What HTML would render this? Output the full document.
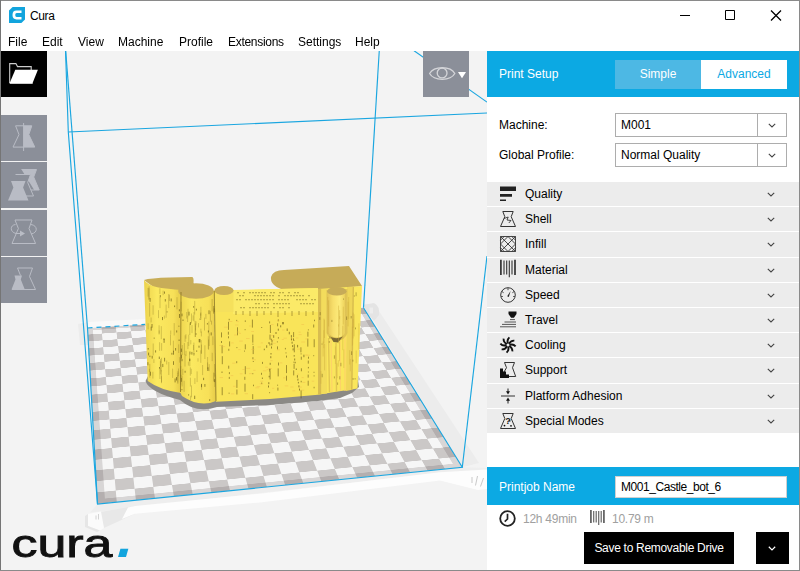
<!DOCTYPE html>
<html>
<head>
<meta charset="utf-8">
<title>Cura</title>
<style>
*{box-sizing:border-box;margin:0;padding:0}
html,body{width:800px;height:571px;overflow:hidden;background:#fff}
body{font-family:"Liberation Sans",sans-serif;font-size:12px;color:#000;position:relative}
.abs{position:absolute}
#win{position:absolute;left:0;top:0;width:800px;height:571px;background:#fff;overflow:hidden}
#titlebar{position:absolute;left:0;top:0;width:800px;height:31px;background:#fff}
#title{position:absolute;left:30px;top:8px;font-size:12px;line-height:16px;color:#000;letter-spacing:-0.4px}
#menubar{position:absolute;left:0;top:31px;width:800px;height:20px;background:#fff}
#menubar span{position:absolute;top:3px;font-size:12px;line-height:16px;white-space:nowrap}
#viewport{position:absolute;left:1px;top:51px;width:799px;height:520px;background:#f3f3f3;overflow:hidden}
#bed{position:absolute;left:-1px;top:-51px;width:400px;height:400px;transform-origin:0 0;
 transform:matrix3d(0.73154056,-0.01664434,0.00000000,0.00011084,-0.03567668,0.11988670,0.00000000,-0.00063515,0.00000000,0.00000000,1.00000000,0.00000000,87.00000000,328.00000000,0.00000000,1.00000000);
 background:repeating-conic-gradient(#cbc8c7 0% 25%,#f6f6f6 0% 50%) 0 0/40px 40px;box-shadow:inset 0 0 0 8px rgba(60,50,50,0.16);}
#scene{position:absolute;left:-1px;top:-51px;width:800px;height:571px}
.tool{position:absolute;left:0;width:46px;height:46px;background:#8b8f99}
#open{position:absolute;left:0;top:0;width:46px;height:46px;background:#000}
#viewbtn{position:absolute;left:422px;top:0;width:46px;height:46px;background:#8b8f99}
#side{position:absolute;left:487px;top:51px;width:313px;height:520px;background:#fff}
#hdr{position:absolute;left:0;top:0;width:313px;height:46px;background:#0ca9e3}
#hdr .lbl{position:absolute;left:12px;top:15px;color:#fff;font-size:12px;line-height:16px}
.tab{position:absolute;top:9px;height:29px;width:86px;text-align:center;font-size:12px;line-height:29px}
#simple{left:128px;background:#4db8e4;color:#fff}
#adv{left:214px;width:86px;background:#fff;color:#0ca9e3}
.flabel{position:absolute;left:12px;font-size:12px;line-height:16px}
.combo{position:absolute;left:128px;width:172px;height:24px;border:1px solid #adadad;background:#fff;font-size:12px;line-height:23px;padding-left:5px}
.combo i{position:absolute;right:0;top:0;width:29px;height:22px;border-left:1px solid #adadad}
.chev{position:absolute;width:10px;height:6px}
.cat{position:absolute;left:0;width:313px;height:24.2px;background:#ececec}
.cat span{position:absolute;left:38px;top:4px;font-size:12px;line-height:16px;white-space:nowrap}
.cat svg.ic{position:absolute;left:13px;top:4px;width:16px;height:16px;overflow:visible}
#job{position:absolute;left:0;top:416px;width:313px;height:38px;background:#0ca9e3}
#job .lbl{position:absolute;left:12px;top:12px;color:#fff;font-size:12px;line-height:16px}
#job .inp{position:absolute;left:128px;top:9px;width:172px;height:22px;background:#fff;border:1px solid #d0d0d0;font-size:12px;line-height:20px;padding-left:5px;letter-spacing:-0.45px}
#stats{position:absolute;left:0;top:459px;width:313px;height:16px;color:#a0a0a0;font-size:12px;line-height:16px;letter-spacing:-0.25px}
#save{position:absolute;left:97px;top:481px;width:150px;height:32px;background:#000;color:#fff;font-size:12px;line-height:32px;text-align:center;letter-spacing:-0.3px}
#savedd{position:absolute;left:269px;top:481px;width:33px;height:32px;background:#000}
</style>
</head>
<body>
<div id="win">
 <div id="viewport">
  <svg id="scene" viewBox="0 0 800 571"></svg>
  <div id="bed"></div>
  <svg id="scene2" class="abs" style="left:-1px;top:-51px;width:800px;height:571px" viewBox="0 0 800 571">

   <defs>
    <pattern id="tx" width="7" height="23" patternUnits="userSpaceOnUse"><path d="M1.5 2v7 M4.5 12v8 M6 1v3" stroke="#8a7420" stroke-width=".6" opacity=".55"/></pattern>
    <pattern id="tx2" width="9" height="9" patternUnits="userSpaceOnUse"><path d="M1 1v5 M5.5 4v4" stroke="#6b5a14" stroke-width=".7" opacity=".6"/></pattern>
    <linearGradient id="cyl" x1="0" x2="1" y1="0" y2="0"><stop offset="0" stop-color="#ecd24c"/><stop offset=".35" stop-color="#fbe960"/><stop offset=".8" stop-color="#f7e058"/><stop offset="1" stop-color="#e6cb48"/></linearGradient>
    <linearGradient id="cyl2" x1="0" x2="1" y1="0" y2="0"><stop offset="0" stop-color="#e4c556"/><stop offset=".3" stop-color="#f7de6a"/><stop offset=".65" stop-color="#fdec7c"/><stop offset=".9" stop-color="#f0d660"/><stop offset="1" stop-color="#d9bb50"/></linearGradient>
   </defs>
   <!-- platform rim -->
   <path d="M97.500 504 L462.300 467.300 L487 468 L487 472 L440 472.500 L100 511.500 L90 512.500z" fill="#eeeeee"/><path d="M100 512 L135 506 L135 513.700 L104 528z" fill="#e8e8e8"/><path d="M128 507.500 L135 506 L260 493.700 L440 472.300 L487 469.500 L487 489 L478 490 L440 480.500 L260 502.500 L135 513.700 L122 519z" fill="#fdfdfd"/><path d="M88 514 L101 511.500 L104 528 L100 530.500 L88 526z" fill="#fbfbfb"/><path d="M85 516 L88 514 L88 526 L100 530.500 L97 532 L85 527z" fill="#e6e6e6"/>
   <path d="M363.500 304 L374 303.500 L479 463 L462.300 467.300z" fill="#ececec"/>
   <path d="M80 322.500 L145 319 L145 324.400 L87.500 328 L80 333z" fill="#f9f9f9"/><path d="M78 324 L87 322 L88 345 L80 345z" fill="#ececec"/>
   <path d="M363.500 305 L374 303 Q380 306 379 315 L374 321 L367 313z" fill="#e4e4e4"/><path d="M369.500 307.500h3.500v6h-3.500z" fill="#ededed"/>
   <path d="M472 477v6 M477.500 476l-2 9.500 M483.500 478l-3 8.500" stroke="#c9c9c9" stroke-width="1" fill="none"/><path d="M98.500 514v5.500 M96 515.500v4" stroke="#c9c9c9" stroke-width=".8" fill="none"/>
   <!--MODEL--><g id="model">
    <!-- shadows -->
    <path d="M145.500 381 Q149 392 180 400 Q196 414 217 407 L270 405 L318 401 L340 398 L352 393 L359 387 L358 380 L150 372z" fill="#8b8985"/>
    <!-- tower A top + back bump -->
    <path d="M144 280 Q150 278 170 277.5 L192 277 Q194 277 193.5 283 L200 296 L160 292z" fill="#c8ad58"/>
    <!-- tower A body -->
    <path d="M144 280 Q149 287 166 288.6 Q176 290 181 290 L181 393 Q160 390 147.7 381z" fill="url(#cyl)"/>
    <!-- tower B -->
    <path d="M178.5 291 L214 291 L216 401 Q200 408 182 396 L180 392z" fill="url(#cyl)"/>
    <ellipse cx="196" cy="291" rx="17.8" ry="7.8" fill="#c8ad58"/>
    <!-- top dark face right -->
    <path d="M271 277 Q273 270 284 270 L349 266 L362 286 L318 291 L281 289 Q270 285 271 277z" fill="#c6ab58"/>
    <!-- front wall -->
    <path d="M214 291 L318 288 L318 394.700 L270 399 L216 401.700z" fill="#f9e459"/>
    <path d="M233 290 L318 288 L318 312 L233 314z" fill="#fbea68"/>
    <!-- small cylinder C -->
    <path d="M214.5 290 L233.5 290 L233.5 312 L216 312z" fill="#f5e05c"/>
    <ellipse cx="224" cy="290.5" rx="9.6" ry="4.5" fill="#c8ad58"/>
    <!-- right tower D -->
    <path d="M318 289 L362 286 L357.500 388.500 L334.500 392 L318 394.700z" fill="#fae65c"/>
    <path d="M318 289 L321.500 289 L321.500 394 L318 394.700z" fill="#d9bd50"/>
    <path d="M321.500 289 L327 289 L327 393.400 L321.500 394z" fill="#f3dc5c"/>
    <path d="M347 287 L352.500 287 L351 390 L346 391z" fill="#efd658"/>
    <path d="M352.500 287 L354 287 L352.500 390 L351 390z" fill="#d8bc4e"/>
    <path d="M331 340 L332 392 M340 341 L340.500 391 M345 300 L345 391" stroke="#fdd368" stroke-width="1.200" fill="none"/>
    <path d="M328.500 338 L329.500 392 M336 343 L336.500 392" stroke="#e2c652" stroke-width="1.400" fill="none"/>
    <!-- inset cylinder -->
    <path d="M326.500 290 L347.500 289 L347.500 333 Q345 340 337 341 Q329 340 326.500 333z" fill="#e0c455"/>
    <path d="M327.500 291 L346 291 L346 330 Q345 337 337 337.600 Q329 337 327.500 330z" fill="url(#cyl2)"/>
    <path d="M330.500 337 Q337 339.500 343 336.500 L338 342.500 L333.500 342z" fill="#7d6a34"/>
    <ellipse cx="336.800" cy="291.300" rx="9.800" ry="4.300" fill="#c6ab58"/>
    <!-- texture -->
    <g id="tex" fill="none" stroke-linecap="butt">
     <path d="M177.8 374.6v9.2M178.7 344.4v8.6M159.6 342.2v8.6M200.9 328.7v4.0M153.2 343.5v11.9M149.8 363.9v13.8M191.5 313.5v9.8M148.0 287.8v8.8M159.9 288.3v5.7M178.5 368.5v7.8M182.3 345.0v10.0M192.0 325.1v8.0M214.8 373.0v14.0M195.1 320.9v6.5M166.7 360.6v3.8M174.2 323.1v12.3M212.1 299.0v12.3M161.3 326.2v13.0M213.7 305.9v7.4M189.8 323.4v11.6M152.9 371.8v6.7M198.5 323.1v4.3M153.9 359.3v3.7M159.1 325.3v9.2M160.0 297.0v11.1M190.8 340.1v4.3M161.5 376.2v6.0M201.6 383.6v6.3M161.3 364.1v7.3M190.6 395.8v4.1M161.5 357.8v5.8M169.4 294.7v6.3M153.1 305.3v9.4M187.9 342.0v7.1M212.2 352.8v8.3M205.9 313.9v5.0M208.8 321.5v12.0M159.9 367.9v11.1M160.4 360.9v13.5M188.0 308.8v7.6M149.6 303.0v13.6M194.9 378.2v5.8M187.6 315.8v6.2M196.0 321.4v3.8M185.0 354.1v12.4M166.1 304.6v13.1M148.1 323.3v6.0M151.1 317.5v4.9M185.9 334.3v4.4M207.6 357.0v13.8M194.0 312.0v9.4M149.4 368.8v3.2M194.7 300.9v13.6M190.3 367.4v8.3M168.7 294.1v14.0M184.1 380.8v11.1M197.1 371.4v10.7M209.2 364.2v6.9M208.3 336.3v12.6M200.8 350.3v12.5M189.5 354.2v7.2M188.4 361.7v3.9M214.5 364.0v12.7M173.4 340.7v11.1M177.0 297.2v12.2M198.0 358.3v3.3M179.7 357.1v5.5M180.8 374.8v9.8M164.4 315.6v3.1M193.1 315.4v5.2M208.6 339.5v10.3M207.6 362.5v6.6M160.5 359.1v7.7M209.2 333.3v12.7M186.7 312.0v6.5M180.8 366.1v12.2M195.4 323.5v13.5M158.5 310.1v8.0M161.6 343.1v7.6M180.6 370.0v6.5M213.8 306.0v8.0M149.1 286.3v12.6M195.2 327.7v9.3M200.8 312.4v3.2M177.9 370.9v3.3M163.1 290.7v4.5M189.8 358.3v7.9M191.5 385.4v11.9M193.5 345.0v5.2M159.2 330.4v3.1M195.6 325.4v5.0M170.5 334.6v10.7M188.8 334.7v11.3M200.9 306.8v13.0M210.4 310.8v10.9M177.8 372.7v9.9M172.6 368.6v9.3M201.2 340.1v13.4M191.3 368.8v5.3M202.6 365.0v10.1M161.5 370.3v12.9M213.5 372.6v8.9M168.8 362.0v13.0M170.7 330.5v3.9M184.4 343.1v11.5M148.9 288.2v11.9M201.4 331.5v4.9M200.6 313.5v4.5M182.1 375.5v11.0M193.9 342.6v13.4M211.5 320.7v3.9M182.8 368.8v6.2M190.4 377.7v8.8M185.1 335.4v6.4M204.5 317.6v12.9M204.9 345.3v13.7M186.0 350.9v5.2M181.2 301.6v9.7M212.9 336.4v8.7M201.5 344.6v9.2" stroke="#7a6518" stroke-width=".6" opacity=".5"/>
     <path d="M194.0 353.3v1.2M175.1 378.5v3.9M165.3 299.1v2.4M176.5 377.1v3.4M179.4 309.3v2.0M189.0 311.7v3.8M200.0 318.6v1.1M162.5 317.0v3.1M171.2 298.5v2.9M196.7 350.4v1.4M164.0 338.3v1.6M176.7 330.4v2.1M183.0 319.5v1.5M189.9 351.5v2.9M204.9 384.0v2.8M162.8 363.9v3.2M208.4 330.5v1.9M209.7 399.2v1.7M207.4 323.1v1.4M196.4 308.7v1.8M203.6 377.8v2.3M155.6 350.3v2.2M148.2 348.0v1.6M209.0 310.3v3.9M181.4 348.6v3.3M193.6 306.1v1.6M154.2 337.6v1.1M182.0 313.6v2.7M159.5 367.0v1.6M214.3 308.4v3.8M151.2 326.7v3.9M199.0 345.7v2.0M182.0 358.9v2.3M147.9 362.2v3.1M159.3 356.6v2.4M174.6 305.5v1.6M181.9 389.2v1.0M201.5 384.1v3.1M189.8 358.8v2.2M181.3 377.9v3.9M164.6 357.8v3.7M199.9 339.0v3.4M208.0 367.3v3.6M199.2 339.0v3.3M196.1 333.4v1.2M178.9 325.7v1.0M190.4 322.0v2.9M211.2 332.4v3.0M191.9 351.9v2.7M173.5 350.7v4.0M194.7 395.7v3.3M148.6 352.6v2.8M164.5 291.5v2.2M160.3 295.1v2.1M164.1 339.1v3.7M181.5 354.7v3.9M214.7 379.2v2.9M152.2 355.8v2.8M150.1 298.0v3.8M179.1 339.5v1.5M188.6 394.3v1.2M175.6 348.0v2.6M171.9 352.8v1.9M185.1 370.8v1.9M167.1 311.4v1.0M149.9 355.6v1.5M173.5 361.2v3.7M150.4 371.7v4.0M152.0 324.0v3.7M179.5 314.0v3.9" stroke="#4f4108" stroke-width=".8" opacity=".7"/>
     <path d="M221.5 332.4v5M221.5 341.0v2M222.1 345.3v8M222.3 356.2v8M222.0 371.5v1.5M222.2 387.2v8M229.2 318.8v1.5M228.5 321.8v8M228.4 331.7v3M228.5 336.3v2M229.6 341.4v5M228.8 348.8v2M228.7 365.7v3M229.4 372.1v2M229.3 376.9v2M229.1 392.7v1M236.7 319.9v1M237.5 327.3v8M236.9 347.1v1M236.7 361.2v2M236.9 379.9v8M236.9 389.5v5M245.3 320.4v1.5M245.1 329.2v1M245.3 344.3v5M244.5 350.6v1M245.3 366.2v8M244.8 376.8v3M245.0 383.7v8M252.4 319.6v8M252.8 334.6v8M252.9 343.7v1M253.2 346.1v8M252.9 357.2v2M253.3 361.0v1M252.8 373.2v1M253.5 384.7v1.5M252.7 394.2v5M261.7 327.0v1M262.5 361.9v2M261.5 372.8v2M262.4 377.5v1.5M261.7 382.6v1.5M269.6 321.4v2M270.4 325.0v8M270.0 334.6v5M269.9 343.5v2M269.9 368.4v2M270.1 371.4v8M269.6 392.2v1M278.3 319.3v2M277.6 323.3v3M278.4 337.1v1.5M277.4 341.4v1M277.5 346.4v3M278.5 362.5v3M278.2 368.4v8M277.6 384.7v1M277.9 387.6v3M285.4 347.9v1.5M286.0 352.4v1M286.5 355.6v2M286.5 365.1v8M286.5 375.7v5M293.6 332.1v5M293.9 339.9v1M294.3 344.3v8M293.9 361.7v1M294.1 363.8v5M293.7 370.4v5M300.9 347.3v5M301.1 353.4v1M301.3 356.7v3M301.4 368.3v3M301.2 380.8v1.5M301.1 390.3v8M308.4 329.4v1M307.9 331.7v5M307.8 338.6v8M308.5 356.7v2M308.3 360.6v3M308.4 366.9v1.5M308.4 371.5v1M308.2 374.6v3M308.2 380.7v5M314.5 319.7v1.5M313.7 324.5v3M314.2 339.2v8M313.7 355.2v1M314.0 371.8v1M314.1 375.4v1M314.1 386.8v1.5" stroke="#5e4e0e" stroke-width=".8" opacity=".7"/>
     <path d="M228.7 321.5h3.6M238.3 349.6h2.3M236.9 332.0h2.7M283.1 377.9h2.6M257.6 347.0h3.3M265.3 367.2h2.7M284.7 385.9h3.5M300.6 390.2h3.6M301.4 342.0h3.7M266.6 369.6h2.1M276.8 349.9h3.0M251.1 349.4h3.5M283.5 338.2h3.3M253.2 370.4h2.4M298.6 334.6h3.1M231.0 393.9h3.3M230.7 375.6h2.5M234.0 335.0h3.2M246.2 368.4h3.9M262.9 370.8h3.6M305.3 338.9h2.5M242.4 369.5h2.8M282.2 330.0h2.3M311.8 381.2h2.4M252.2 359.8h3.6M256.6 386.6h3.7M298.6 332.2h2.1M259.8 383.8h3.3M239.8 373.8h2.8M232.2 363.2h3.3M239.1 341.1h3.7M260.1 381.2h3.1M302.4 382.4h2.9M233.1 386.3h2.5M271.9 339.9h2.8M249.0 326.0h2.4M270.3 360.7h2.3M219.7 377.6h3.3M219.4 345.5h2.3M292.4 390.8h2.8M222.0 346.6h3.1M270.8 335.6h3.2M295.9 338.0h2.4M246.0 338.5h3.6M272.1 388.3h2.1M298.7 387.1h3.1M281.8 339.5h2.0M270.7 324.6h2.9M301.4 324.5h2.7M290.3 339.0h2.5M305.0 355.0h2.6M268.4 368.5h3.6M290.4 387.0h3.0M297.1 349.1h3.8M277.0 320.7h2.3M249.1 373.6h3.0M244.7 393.7h3.3M260.8 342.9h2.1M279.8 362.9h2.5M238.9 333.4h2.1M231.2 342.9h2.4M251.3 331.5h2.7M236.0 321.6h2.8M223.9 327.2h3.9M297.1 374.2h2.0M235.2 325.0h3.2M272.8 343.3h2.9M306.3 355.2h3.6M301.6 377.6h2.1M255.3 387.8h3.8" stroke="#efb84a" stroke-width=".8" opacity=".55"/>
     <path d="M283.0 322.0v2.5M287.2 328.5v2.5M289.3 331.8v2.5M291.4 335.1v2.5M293.5 338.4v2M297.6 344.9v2.5M303.9 354.7v2.5M283.0 322.0v2M280.7 325.3v2M278.3 328.7v2M276.0 332.0v2M273.7 335.3v2.5M271.3 338.7v1.5M269.0 342.0v2M266.7 345.3v2.5M264.3 348.7v1.5M291.5 338.4v2M292.1 341.7v2M292.6 345.1v2M293.1 348.4v2M294.2 355.1v1.5M294.7 358.5v2M295.2 361.8v1.5M296.3 368.5v1.5M297.4 375.2v2.5M297.9 378.6v2M298.4 381.9v1.5M298.9 385.3v2M299.5 388.6v2M272.0 340.0v2.5M271.8 343.2v2M271.5 346.5v2M271.0 353.0v1.5M270.8 356.2v2M270.2 362.8v2M269.8 369.2v2.5M269.2 375.8v1.5M268.8 382.2v2M268.5 385.5v2" stroke="#5e4e0e" stroke-width=".9" opacity=".7"/>
     <path d="M238.0 292v1.3M244.0 292v1.3M250.0 292v1.3M253.0 292v1.3M256.0 292v1.3M259.0 292v1.3M262.0 292v1.3M265.0 292v1.3M271.0 292v1.3M274.0 292v1.3M280.0 292v1.3M283.0 292v1.3M289.0 292v1.3M295.0 292v1.3M298.0 292v1.3M240.0 295v1.3M243.0 295v1.3M255.0 295v1.3M258.0 295v1.3M261.0 295v1.3M264.0 295v1.3M267.0 295v1.3M270.0 295v1.3M273.0 295v1.3M279.0 295v1.3M285.0 295v1.3M288.0 295v1.3M291.0 295v1.3M294.0 295v1.3M297.0 295v1.3M300.0 295v1.3M303.0 295v1.3M309.0 295v1.3M237.0 299v1.3M240.0 299v1.3M246.0 299v1.3M249.0 299v1.3M252.0 299v1.3M255.0 299v1.3M258.0 299v1.3M261.0 299v1.3M264.0 299v1.3M267.0 299v1.3M270.0 299v1.3M273.0 299v1.3M279.0 299v1.3M282.0 299v1.3M285.0 299v1.3M288.0 299v1.3M297.0 299v1.3M300.0 299v1.3M303.0 299v1.3M306.0 299v1.3M312.0 299v1.3M315.0 299v1.3M256.0 303v1.3M259.0 303v1.3M265.0 303v1.3M268.0 303v1.3M274.0 303v1.3M277.0 303v1.3M280.0 303v1.3M283.0 303v1.3M286.0 303v1.3M289.0 303v1.3M301.0 303v1.3M304.0 303v1.3M307.0 303v1.3M310.0 303v1.3M313.0 303v1.3M241.0 307v1.3M244.0 307v1.3M250.0 307v1.3M253.0 307v1.3M256.0 307v1.3M259.0 307v1.3M262.0 307v1.3M265.0 307v1.3M268.0 307v1.3M274.0 307v1.3M280.0 307v1.3M283.0 307v1.3M289.0 307v1.3" stroke="#5e4e0e" stroke-width="1" opacity=".75"/>
     <path d="M236 311v4M243 311v4M250 311v5M257 311v5M264 311v4M271 311v4M278 311v6M285 311v4M292 311v5M299 311v4M306 311v5M313 311v4" stroke="#8a7420" stroke-width=".9" opacity=".7"/>
     <path d="M342.8 325.9v24.2M338.6 305.6v21.0M338.5 324.3v19.0M320.9 371.1v12.6M343.8 349.5v18.5M339.5 341.6v19.6M327.7 297.0v8.5M348.1 301.8v24.6M328.6 300.3v26.1M358.9 323.4v26.1M353.2 312.7v15.2M354.1 314.3v22.1M343.3 306.7v17.7M339.6 310.1v9.1M335.4 346.5v17.5M339.7 316.1v19.2M337.1 363.2v15.0M352.4 326.7v18.8M324.5 319.6v18.4M323.1 341.6v14.9M324.6 344.0v26.4M338.3 360.3v6.3M348.7 297.0v21.9M353.1 319.1v19.4M323.9 318.7v24.6M350.3 359.0v12.2M323.8 330.3v17.8M356.2 350.5v12.8M327.9 305.7v28.2M349.7 350.1v14.4" stroke="#c9a838" stroke-width=".7" opacity=".6"/>
     <path d="M339.8 376.2v3.2M351.2 316.0v2.4M353.1 378.0v1.9M355.1 378.1v1.4M355.5 327.5v1.8M352.9 359.7v1.9M354.4 295.4v1.2M331.9 319.9v2.1M351.6 351.3v3.7M334.4 376.4v2.0M320.2 312.1v3.1M322.0 343.5v1.1M343.5 298.5v1.2M337.6 382.5v2.3M334.4 355.3v3.4M329.9 336.2v2.5M319.8 317.1v2.8M329.3 341.1v1.7M356.1 292.3v3.9M340.9 362.8v3.5M322.2 373.8v3.5M346.6 316.5v3.4" stroke="#5e4e0e" stroke-width=".7" opacity=".6"/>
    </g>
    <path d="M214.300 291 L216 401 M181 292 L180.500 392" stroke="#8a7420" stroke-width="1" fill="none" opacity=".8"/>
   </g><!--/MODEL-->
   <g fill="none" stroke="#1aa6e0" stroke-width="1.15">
    <path d="M87.500 328 L97.500 504 L462.300 467.300 L363.500 307.700"/>
    <path d="M97.500 504 L68.300 132 L65.500 50"/>
    <path d="M87.500 328 L65.600 50"/><path d="M87.500 328 L145 324.400" stroke-dasharray="5 4"/>
    <path d="M68.300 132 L487 113"/>
    <path d="M363.500 307.700 L379.300 50"/>
    <path d="M413 50 L487 102.100"/>
    <path d="M462.300 467.300 L487 256"/>
   </g>
  </svg>
  <div id="open"><svg class="abs" style="left:0;top:0;width:46px;height:46px" viewBox="0 0 46 46"><path d="M8.700 32V12.600h6.200l1.600 3h13.700v3.400" fill="none" stroke="#fff" stroke-width="1.100" opacity=".8"/><path d="M8.7 32l5.6-13.3h22.6L31.6 32z" fill="#fff"/><path d="M8.7 32.3h23" stroke="#fff" stroke-width="1" fill="none"/></svg></div>
  <div class="tool" style="top:64px"><svg class="abs" style="left:0;top:0;width:46px;height:46px" viewBox="0 0 46 46"><path d="M14.6 10.8h16.2l-3 8.8 6 12.5H12l6-12.5z" fill="none" stroke="#b9bcc5" stroke-width="1"/><path d="M22.6 10.8h8.2l-3 8.8 6 12.5h-11.2z" fill="#b9bcc5"/><path d="M22.6 8v28" stroke="#b9bcc5" stroke-width="1" fill="none"/></svg></div>
  <div class="tool" style="top:111.4px"><svg class="abs" style="left:0;top:0;width:46px;height:46px" viewBox="0 0 46 46"><path d="M20.5 7.5h15l-2.8 7.5 5.5 13h-5" fill="#b9bcc5"/><path d="M20.5 7.5h15l-2.8 7.5 5.5 13H27" fill="none" stroke="#b9bcc5" stroke-width="1"/><path d="M14.5 12.5h15l-2.8 8 5.8 13.5h-8" fill="#8b8f99" stroke="#b9bcc5" stroke-width="1"/><path d="M10 19h14.5l-2.4 6.5 5.4 13H7l5.4-13z" fill="#b9bcc5"/></svg></div>
  <div class="tool" style="top:158.9px"><svg class="abs" style="left:0;top:0;width:46px;height:46px" viewBox="0 0 46 46"><path d="M14 10h17l-3 8.5 6.6 15H11l6.4-15z" fill="none" stroke="#b9bcc5" stroke-width="1"/><path d="M14.5 14.5C9 15 8.5 22 15 23.5h4" fill="none" stroke="#b9bcc5" stroke-width="1"/><path d="M30 14.5c7 1 7 8.500 0 9.500" fill="none" stroke="#b9bcc5" stroke-width="1"/><path d="M19 20.500l5 3-5 3z" fill="#b9bcc5"/></svg></div>
  <div class="tool" style="top:206.2px"><svg class="abs" style="left:0;top:0;width:46px;height:46px" viewBox="0 0 46 46"><path d="M16.500 11h15l-3 8.500 6 13H11" fill="none" stroke="#b9bcc5" stroke-width="1"/><path d="M13.500 18.500h7.500l-1.200 4 4 10H10.500l4-10z" fill="#b9bcc5"/><path d="M16.500 11l3 7.500" fill="none" stroke="#b9bcc5" stroke-width="1"/></svg></div>
  <div id="viewbtn"><svg class="abs" style="left:0;top:0;width:46px;height:46px" viewBox="0 0 46 46"><path d="M6.600 22.500C11 14.800 27.500 14.800 31.800 22.500C27.500 30.200 11 30.200 6.600 22.500z" fill="none" stroke="#d4d5d9" stroke-width="1.300"/><circle cx="19.100" cy="22" r="4.900" fill="none" stroke="#d4d5d9" stroke-width="1.300"/><path d="M35 21h8l-4 6.200z" fill="#fff"/></svg></div>
 </div>
 <div id="side">
  <div id="hdr"><div class="lbl">Print Setup</div>
   <div class="tab" id="simple">Simple</div><div class="tab" id="adv">Advanced</div></div>
  <div class="flabel" style="top:66px">Machine:</div>
  <div class="combo" style="top:62px">M001<i><svg class="abs" style="left:10px;top:9px;width:8px;height:5px" viewBox="0 0 8 5"><path d="M.8 .8L4 3.900l3.200-3.100" fill="none" stroke="#444" stroke-width="1.100"/></svg></i></div>
  <div class="flabel" style="top:96px">Global Profile:</div>
  <div class="combo" style="top:92px">Normal Quality<i><svg class="abs" style="left:10px;top:9px;width:8px;height:5px" viewBox="0 0 8 5"><path d="M.8 .8L4 3.900l3.200-3.100" fill="none" stroke="#444" stroke-width="1.100"/></svg></i></div>
  <div id="cats">
   <div class="cat" style="top:131.0px"><svg class="ic" viewBox="0 0 16 16"><path d="M0 .4h16v4.600H0z M0 8h12v2.800H0z M0 13.400h6v1.500H0z" fill="#222"/></svg><span>Quality</span><svg class="chev" style="left:280px;top:10px;width:8px;height:5px" viewBox="0 0 8 5"><path d="M.8 .8L4 3.900l3.200-3.100" fill="none" stroke="#444" stroke-width="1.100"/></svg></div>
   <div class="cat" style="top:156.2px"><svg class="ic" viewBox="0 0 16 16"><path d="M2.800 .5h10.400l-2 5.200 4.300 9.800H.5l4.300-9.800z" fill="none" stroke="#333" stroke-width="1"/><path d="M4 7.500l4.200-1.500-1.200 3 4 .5-2.200 2.500" fill="none" stroke="#333" stroke-width=".9"/></svg><span>Shell</span><svg class="chev" style="left:280px;top:10px;width:8px;height:5px" viewBox="0 0 8 5"><path d="M.8 .8L4 3.900l3.200-3.100" fill="none" stroke="#444" stroke-width="1.100"/></svg></div>
   <div class="cat" style="top:181.4px"><svg class="ic" viewBox="0 0 16 16"><path d="M.5 .5h15v15H.5z M8 .5l7.5 7.5L8 15.5.5 8z M.5 .5l15 15 M15.5 .5l-15 15" fill="none" stroke="#333" stroke-width=".9"/><path d="M4.2 .5L.5 4.2 M11.8 .5l3.7 3.7 M.5 11.8l3.7 3.7 M15.5 11.8l-3.7 3.7" fill="none" stroke="#333" stroke-width=".9"/></svg><span>Infill</span><svg class="chev" style="left:280px;top:10px;width:8px;height:5px" viewBox="0 0 8 5"><path d="M.8 .8L4 3.900l3.200-3.100" fill="none" stroke="#444" stroke-width="1.100"/></svg></div>
   <div class="cat" style="top:206.6px"><svg class="ic" viewBox="0 0 16 16"><path d="M.9 -2.300v15.300 M15 -2.300v15.300" stroke="#333" stroke-width="1.700" fill="none"/><path d="M4 -1.500v14 M6.700 -1.500v14 M9.300 -1.500v16.800 M12 -1.500v14" stroke="#333" stroke-width="1.100" fill="none"/></svg><span>Material</span><svg class="chev" style="left:280px;top:10px;width:8px;height:5px" viewBox="0 0 8 5"><path d="M.8 .8L4 3.900l3.200-3.100" fill="none" stroke="#444" stroke-width="1.100"/></svg></div>
   <div class="cat" style="top:231.8px"><svg class="ic" viewBox="0 0 16 16"><circle cx="8" cy="8" r="7.3" fill="none" stroke="#333" stroke-width="1"/><path d="M8 1.2v2 M2 4.6l1.6 1.1 M14 4.6l-1.6 1.1 M1.2 9.5h1.6 M14.8 9.5h-1.6" stroke="#333" stroke-width=".9" fill="none"/><path d="M7.2 9.3L10.6 4l-1.8 6z" fill="#222"/></svg><span>Speed</span><svg class="chev" style="left:280px;top:10px;width:8px;height:5px" viewBox="0 0 8 5"><path d="M.8 .8L4 3.900l3.200-3.100" fill="none" stroke="#444" stroke-width="1.100"/></svg></div>
   <div class="cat" style="top:257.0px"><svg class="ic" viewBox="0 0 16 16"><path d="M8.500 -.5h8v2.600l-2.600 3.600h-2.800L8.500 2.100z" fill="#111"/><path d="M10 7.6h5 M4.5 10h11.5 M2 12.4h14 M0 14.8h16" stroke="#444" stroke-width=".9" fill="none"/></svg><span>Travel</span><svg class="chev" style="left:280px;top:10px;width:8px;height:5px" viewBox="0 0 8 5"><path d="M.8 .8L4 3.900l3.200-3.100" fill="none" stroke="#444" stroke-width="1.100"/></svg></div>
   <div class="cat" style="top:282.2px"><svg class="ic" viewBox="0 0 16 16"><g fill="none" stroke="#111" stroke-width="1.9" stroke-linecap="butt"><path d="M8 6.5C7.2 4.5 7.6 2 9.4.4"/><path d="M8 6.5C7.2 4.5 7.6 2 9.4.4" transform="rotate(45 8 8)"/><path d="M8 6.5C7.2 4.5 7.6 2 9.4.4" transform="rotate(90 8 8)"/><path d="M8 6.5C7.2 4.5 7.6 2 9.4.4" transform="rotate(135 8 8)"/><path d="M8 6.5C7.2 4.5 7.6 2 9.4.4" transform="rotate(180 8 8)"/><path d="M8 6.5C7.2 4.5 7.6 2 9.4.4" transform="rotate(225 8 8)"/><path d="M8 6.5C7.2 4.5 7.6 2 9.4.4" transform="rotate(270 8 8)"/><path d="M8 6.5C7.2 4.5 7.6 2 9.4.4" transform="rotate(315 8 8)"/></g></svg><span>Cooling</span><svg class="chev" style="left:280px;top:10px;width:8px;height:5px" viewBox="0 0 8 5"><path d="M.8 .8L4 3.900l3.200-3.100" fill="none" stroke="#444" stroke-width="1.100"/></svg></div>
   <div class="cat" style="top:307.4px"><svg class="ic" viewBox="0 0 16 16"><path d="M4.500 .5h10l-2 5.200 3.200 8.800H1.500l5-8.800z" fill="none" stroke="#333" stroke-width="1"/><path d="M0 6.5h3v3h3v3h3v3.5H0z" fill="#111"/></svg><span>Support</span><svg class="chev" style="left:280px;top:10px;width:8px;height:5px" viewBox="0 0 8 5"><path d="M.8 .8L4 3.900l3.200-3.100" fill="none" stroke="#444" stroke-width="1.100"/></svg></div>
   <div class="cat" style="top:332.6px"><svg class="ic" viewBox="0 0 16 16"><path d="M1 8h14" stroke="#333" stroke-width="1" fill="none"/><path d="M8 .5v4 M8 15.5v-4" stroke="#222" stroke-width="1" fill="none"/><path d="M6 3.2h4L8 6.4z M6 12.8h4L8 9.6z" fill="#111"/></svg><span>Platform Adhesion</span><svg class="chev" style="left:280px;top:10px;width:8px;height:5px" viewBox="0 0 8 5"><path d="M.8 .8L4 3.900l3.200-3.100" fill="none" stroke="#444" stroke-width="1.100"/></svg></div>
   <div class="cat" style="top:357.8px"><svg class="ic" viewBox="0 0 16 16"><path d="M2.800 .5h10.400l-2 5 4.300 10H.5l4.300-10z" fill="none" stroke="#333" stroke-width="1"/><text x="5.2" y="10.5" font-family="Liberation Sans, sans-serif" font-size="9" font-weight="bold" fill="#111">?</text><circle cx="4.5" cy="12.6" r=".9" fill="#111"/><circle cx="11" cy="12.8" r=".9" fill="#111"/><circle cx="9.8" cy="8" r=".7" fill="#111"/></svg><span>Special Modes</span><svg class="chev" style="left:280px;top:10px;width:8px;height:5px" viewBox="0 0 8 5"><path d="M.8 .8L4 3.900l3.200-3.100" fill="none" stroke="#444" stroke-width="1.100"/></svg></div>
  </div><!--/cats-->
  <div id="job"><div class="lbl">Printjob Name</div><div class="inp">M001_Castle_bot_6</div></div>
  <div id="stats"><svg class="abs" style="left:12px;top:0;width:17px;height:17px" viewBox="0 0 17 17"><circle cx="8.500" cy="8.500" r="7.300" fill="none" stroke="#222" stroke-width="1.800"/><path d="M8.500 3.800v5.200l-2.800 2.600" fill="none" stroke="#222" stroke-width="1.700"/></svg><svg class="abs" style="left:103px;top:0;width:15px;height:16px" viewBox="0 0 15 16"><path d="M.9 0v13 M13.900 0v13" stroke="#666" stroke-width="1.800" fill="none"/><path d="M3.700 1v11.500 M6.200 1v11.500 M8.700 1v14 M11.200 1v11.500" stroke="#666" stroke-width="1.200" fill="none"/></svg><span class="abs" style="left:36px;top:1px">12h 49min</span><span class="abs" style="left:125px;top:1px">10.79 m</span></div>
  <div id="save">Save to Removable Drive</div>
  <div id="savedd"><svg class="abs" style="left:12px;top:14px;width:8px;height:5px" viewBox="0 0 8 5"><path d="M.8 .8L4 3.900l3.200-3.100" fill="none" stroke="#fff" stroke-width="1.200"/></svg></div>
 </div>
 <svg id="logo" class="abs" style="left:0;top:520px;width:150px;height:51px" viewBox="0 520 150 51"><text x="11.500" y="556.600" font-family="Liberation Sans, sans-serif" font-size="39.500" textLength="101" lengthAdjust="spacingAndGlyphs" fill="#111" stroke="#111" stroke-width=".9">cura</text><text x="0" y="0" transform="translate(114.300 556.600) skewX(-16)" font-family="Liberation Sans, sans-serif" font-weight="bold" font-size="56" fill="#12a4dd">.</text></svg>
 <div id="titlebar"><div id="title">Cura</div>
  <svg class="abs" style="left:9px;top:7px;width:16px;height:16px" viewBox="0 0 16 16"><path d="M3.6 0H16v12.4L12.4 16H0V3.6z" fill="#12a4dd"/><path d="M12.500 3.600H7.500Q3.500 3.600 3.500 8Q3.500 12.400 7.500 12.400h5V9.900H7.700Q6.200 9.900 6.200 8Q6.200 6.100 7.700 6.100h4.800z" fill="#fff"/></svg>
  <svg class="abs" style="left:670px;top:0;width:130px;height:31px" viewBox="0 0 130 31"><path d="M10 15.5h10 M55.5 10.5h9v9h-9z " fill="none" stroke="#000" stroke-width="1"/><path d="M101 10.500l10 10 M111 10.500l-10 10" fill="none" stroke="#000" stroke-width="1.300"/></svg>
 </div>
 <div id="menubar">
  <span style="left:8px">File</span><span style="left:42px">Edit</span><span style="left:78px">View</span><span style="left:118px">Machine</span><span style="left:179px">Profile</span><span style="left:228px;letter-spacing:-0.3px">Extensions</span><span style="left:298px">Settings</span><span style="left:355px">Help</span>
 </div>
 <div class="abs" style="left:0;top:0;width:800px;height:1px;background:#8a8a8a"></div>
 <div class="abs" style="left:0;top:0;width:1px;height:571px;background:#757575"></div>
 <div class="abs" style="left:799px;top:0;width:1px;height:571px;background:#8a8a8a"></div>
 <div class="abs" style="left:0;top:570px;width:800px;height:1px;background:#8a8a8a"></div>
</div>
</body>
</html>
